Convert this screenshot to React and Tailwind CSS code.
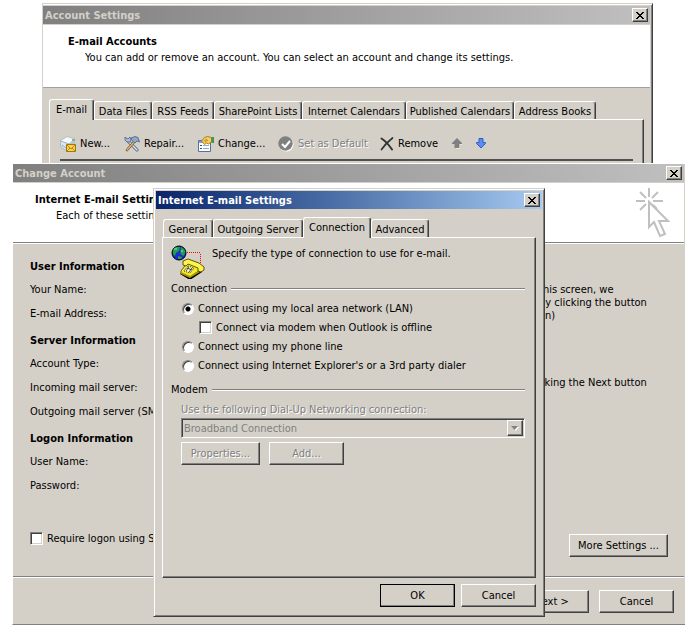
import React, { useState } from "react";

const raised =
    "bg-[#d4d0c8] border border-t-white border-l-white border-r-[#404040] border-b-[#404040] shadow-[inset_-1px_-1px_0_#808080]";

const disabledText = "text-[#808080] [text-shadow:1px_1px_0_#ffffff]";

const accountTabs = [
    { label: "Data Files", width: "w-[58px]" },
    { label: "RSS Feeds", width: "w-[62px]" },
    { label: "SharePoint Lists", width: "w-[88px]" },
    { label: "Internet Calendars", width: "w-[104px]" },
    { label: "Published Calendars", width: "w-[108px]" },
    { label: "Address Books", width: "w-[82px]" },
];

function TitleBar({ title, active }) {
    return (
        <div
            className={
                "flex h-[18px] items-center justify-between bg-linear-to-r pl-0.5 pr-0.5 font-bold " +
                (active ? "from-[#0a246a] to-[#a6caf0] text-white" : "from-[#808080] to-[#c0c0c0] text-[#d4d0c8]")
            }
        >
            <h2>{title}</h2>
            <button aria-label="Close" className={"flex h-[14px] w-4 items-center justify-center " + raised}>
                <svg width="8" height="7" viewBox="0 0 8 7" shapeRendering="crispEdges">
                    <path
                        d="M0 0h2v1h1v1h2v-1h1v-1h2v1h-1v1h-1v1h-1v1h1v1h1v1h1v1h-2v-1h-1v-1h-2v1h-1v1h-2v-1h1v-1h1v-1h1v-1h-1v-1h-1v-1h-1z"
                        fill="#000"
                    />
                </svg>
            </button>
        </div>
    );
}

function Tab({ label, width, selected }) {
    return (
        <button
            role="tab"
            aria-selected={!!selected}
            className={
                "flex shrink-0 justify-center whitespace-nowrap rounded-t-[3px] border border-b-0 border-t-white border-l-white border-r-[#404040] bg-[#d4d0c8] shadow-[inset_-1px_0_0_#808080] " +
                width +
                (selected ? " relative z-10 -mb-px h-[21px] pt-[3px]" : " h-[18px] pt-[3px]")
            }
        >
            {label}
        </button>
    );
}

function PushButton({ children, className, disabled }) {
    return (
        <button
            disabled={disabled}
            className={"flex h-[23px] items-center justify-center whitespace-nowrap " + raised + " " + className + (disabled ? " " + disabledText : "")}
        >
            {children}
        </button>
    );
}

function CheckBox(props) {
    return (
        <input
            type="checkbox"
            className="size-[13px] shrink-0 appearance-none border border-t-[#808080] border-l-[#808080] border-r-white border-b-white bg-white shadow-[inset_1px_1px_0_#404040,inset_-1px_-1px_0_#d4d0c8] checked:bg-[#404040]"
            {...props}
        />
    );
}

function Radio({ label, value, selected, onSelect }) {
    return (
        <label className="flex h-[19px] items-center gap-1 pl-[19px]">
            <input
                type="radio"
                name="connection"
                checked={selected === value}
                onChange={() => onSelect(value)}
                className="size-3 shrink-0 appearance-none rounded-full border border-t-[#808080] border-l-[#808080] border-r-white border-b-white bg-white shadow-[inset_1px_1px_0_#404040] checked:bg-[radial-gradient(circle_at_center,#000_2px,#fff_3px)]"
            />
            {label}
        </label>
    );
}

function GroupHeading({ children }) {
    return (
        <legend className="flex w-full items-center gap-1 pl-2 pr-2.5 leading-[13px]">
            {children}
            <span className="h-0.5 flex-1 border-t border-t-[#808080] bg-white" />
        </legend>
    );
}

function NewIcon() {
    return (
        <svg width="16" height="16" viewBox="0 0 16 16">
            <path d="M0 5l7-4.500 8 2.500-6 5z" fill="#f6f9fc" stroke="#a9b4c4" strokeWidth=".8" />
            <path d="M0 5l9 3v6l-2 1-6-4z" fill="#dfe7f0" stroke="#9aa8bc" strokeWidth=".7" />
            <path d="M9 8l6-5v5l-6 5z" fill="#b7c5d8" />
            <path d="M2 9l4 3" stroke="#7fa9d8" />
            <path d="M6.500 8.500h9v7h-9z" fill="#fbd34c" stroke="#a37412" />
            <path d="M7 9l4 4 4-4M7 15l3-3M15 15l-3-3" fill="none" stroke="#b98617" />
            <path d="M12 4h3" stroke="#58b947" strokeWidth="1.500" />
        </svg>
    );
}

function RepairIcon() {
    return (
        <svg width="16" height="16" viewBox="0 0 16 16" fill="none">
            <path d="M4 5l9 9" stroke="#3f5674" strokeWidth="3" strokeLinecap="round" />
            <path d="M4 5l9 9" stroke="#d8e4f2" strokeWidth="1.600" strokeLinecap="round" />
            <path d="M1 1v3l2 2h3l1-2-1-3-2 2-2-1z" fill="#a9c0dc" stroke="#48617f" strokeWidth=".8" />
            <path d="M10 6l-7 8" stroke="#6d4a24" strokeWidth="2.600" strokeLinecap="round" />
            <path d="M10 6l-7 8" stroke="#e4b46d" strokeWidth="1.300" strokeLinecap="round" />
            <path d="M7 2l4-1.500 3 1 1.500 4.500-2.500-1-2 2-3-2.500z" fill="#8fa8c8" stroke="#48617f" strokeWidth=".8" />
        </svg>
    );
}

function ChangeIcon() {
    return (
        <svg width="16" height="16" viewBox="0 0 16 16">
            <path d="M.5 4.500h12v11h-12z" fill="#fff" stroke="#5272a4" />
            <path d="M1 5h11v2h-11z" fill="#7da2d8" />
            <path d="M2 9h2v1h-2zM2 12h2v1h-2z" fill="#2b4f8e" />
            <path d="M5 9h6v1h-6zM5 12h6v1h-6z" fill="#8fa9cf" />
            <path d="M3.500 5l3-3.500 3-1 4 1v4.500l-3 2-2-1-2 1.500z" fill="#f7cf57" stroke="#96691a" strokeWidth=".8" />
            <path d="M6 5l3-2M7 6l3-2" stroke="#a97720" strokeWidth=".8" />
            <path d="M13.500 1h2.500v6h-2.500z" fill="#3f9455" />
        </svg>
    );
}

function DefaultIcon() {
    return (
        <svg width="16" height="16" viewBox="0 0 16 16" fill="none">
            <circle cx="8.500" cy="8.500" r="7" fill="#fff" />
            <circle cx="7.500" cy="7.500" r="7.200" fill="#808080" />
            <path d="M4 8l3 3 5-6" stroke="#fff" strokeWidth="2" />
        </svg>
    );
}

function RemoveIcon() {
    return (
        <svg width="14" height="14" viewBox="0 0 14 14" fill="none" stroke="#333" strokeLinecap="round">
            <path d="M1.500 1.500Q7 5 12 12.500" strokeWidth="2" />
            <path d="M12.500 1Q6 6 1.500 12.500" strokeWidth="1.700" />
        </svg>
    );
}

function ArrowIcon({ up }) {
    return (
        <svg width="10" height="11" viewBox="0 0 10 11">
            {up ? (
                <>
                    <path d="M6 1.500l4 4v1h-2v4h-4v-4z" fill="#fff" />
                    <path d="M5 0l5 5v1h-2.500v4h-5v-4h-2.500v-1z" fill="#808080" />
                </>
            ) : (
                <path d="M3 .5h4v4h2.500v1l-4.500 4.500-4.500-4.500v-1h2.500z" fill="#5b8cf0" stroke="#2a55c0" strokeWidth=".9" />
            )}
        </svg>
    );
}

function ClickIcon() {
    return (
        <svg width="34" height="50" viewBox="0 0 34 50" fill="none" stroke="#c0c0c0" strokeWidth="2">
            <path d="M13 0v9M0 13h9M17 13h10M4 4l6 6M22 4l-6 6M4 22l6-6M17 17l4 4" />
            <path d="M13 14v25l5-5 6 14 5-2-6-13h9z" />
        </svg>
    );
}

function DialUpIcon() {
    return (
        <svg className="shrink-0" width="34" height="34" viewBox="0 0 34 34">
            <path d="M16 7h1v1h-1zM18 7h1v1h-1zM20 7h1v1h-1zM22 7h1v1h-1zM24 7h1v1h-1zM26 7h1v1h-1zM28 7h1v1h-1z" fill="#f00" />
            <path d="M29 9h1v1h-1zM29 11h1v1h-1zM29 13h1v1h-1zM29 15h1v1h-1zM29 17h1v1h-1z" fill="#f00" />
            <circle cx="8" cy="8" r="7" fill="#1a2bd8" stroke="#000" />
            <path d="M2 5l3-3h4l-1 4-3 2-1 3-2-2zM10 2l3 2 1.500 3-2 4-3-2v-3zM7 11l4 1-1 2h-3z" fill="#1fa33a" />
            <path d="M3 4h3M10 6h2" stroke="#8ee" />
            <path d="M10 28l7-10 14 4v5l-12 8-10-6z" fill="#000" />
            <path d="M10 26l6-8 13 3v4l-10 7-9-4z" fill="#f5ea2a" stroke="#4a4500" strokeWidth=".8" />
            <path d="M10 27l9 4 10-6v2l-10 6-9-4z" fill="#a89c00" />
            <path d="M12 20v-4l5-2 11 4 5 4v3l-3 2-3-1v-3l-10-4-2 2z" fill="#fff44a" stroke="#4a4500" strokeWidth=".9" />
            <path d="M17 21l6 2-4 5-6-2z" fill="#fffbc0" stroke="#000" strokeWidth=".8" strokeDasharray="1 1" />
            <path d="M16 23l5 2M18 22l-3 4M21 23l-3 4" stroke="#222" strokeWidth=".8" />
        </svg>
    );
}

function AccountSettings() {
    return (
        <section className="ml-[42px] mr-[47px] mt-[3px] self-start border border-[#d4d0c8] border-r-[#404040] bg-[#d4d0c8] pr-0.5 pt-0.5 shadow-[inset_0_1px_0_#fff,inset_-1px_0_0_#808080] [grid-area:1/1]">
            <TitleBar title="Account Settings" />
            <div className="mt-px h-[63px] border-b border-b-[#a0a0a0] bg-white pl-[25px] pt-[9px]">
                <h3 className="font-bold leading-4">E-mail Accounts</h3>
                <p className="whitespace-nowrap pl-[17px] leading-4">
                    You can add or remove an account. You can select an account and change its settings.
                </p>
            </div>
            <div className="pl-1.5 pr-1.5 pt-[11px]">
                <div role="tablist" className="flex items-end">
                    <Tab label="E-mail" width="w-[45px]" selected />
                    {accountTabs.map((t) => (
                        <Tab key={t.label} label={t.label} width={t.width} />
                    ))}
                </div>
                <div className="border border-t-white border-l-white border-r-[#404040] border-b-[#404040] px-2.5 pt-3 shadow-[inset_-1px_0_0_#808080]">
                    <div className="flex h-6 items-center whitespace-nowrap pb-px">
                        <button className="flex w-16 items-center gap-1">
                            <NewIcon />
                            New...
                        </button>
                        <button className="flex w-[74px] items-center gap-1">
                            <RepairIcon />
                            Repair...
                        </button>
                        <button className="flex w-20 items-center gap-1">
                            <ChangeIcon />
                            Change...
                        </button>
                        <button disabled className={"flex w-[102px] items-center gap-1 " + disabledText}>
                            <DefaultIcon />
                            Set as Default
                        </button>
                        <button className="flex w-[72px] items-center gap-1">
                            <RemoveIcon />
                            Remove
                        </button>
                        <button disabled aria-label="Move up" className="w-6">
                            <ArrowIcon up />
                        </button>
                        <button aria-label="Move down">
                            <ArrowIcon />
                        </button>
                    </div>
                    <div className="mt-[3px] h-24 border-t-2 border-t-[#505050]" />
                </div>
            </div>
        </section>
    );
}

function ChangeAccount() {
    return (
        <section className="ml-3 mr-[15px] mt-[163px] self-start border-b border-l border-t border-b-[#808080] border-l-white border-t-white bg-[#d4d0c8] pr-px [grid-area:1/1]">
            <TitleBar title="Change Account" />
            <div className="mt-px flex h-[60px] justify-between border-b border-b-[#808080] bg-white pl-[22px] pr-3.5 pt-[5px]">
                <div className="whitespace-nowrap pt-1">
                    <h3 className="font-bold leading-4">Internet E-mail Settings</h3>
                    <p className="pl-[21px] leading-4">Each of these settings are required to get your e-mail account working.</p>
                </div>
                <ClickIcon />
            </div>
            <div className="flex whitespace-nowrap border-t border-t-white pl-[17px] pt-[11px]">
                <div className="flex-1">
                    <h4 className="flex h-[22px] items-center font-bold">User Information</h4>
                    <p className="flex h-6 items-center">Your Name:</p>
                    <p className="flex h-6 items-center">E-mail Address:</p>
                    <h4 className="mt-1 flex h-[22px] items-center font-bold">Server Information</h4>
                    <p className="flex h-6 items-center">Account Type:</p>
                    <p className="flex h-6 items-center">Incoming mail server:</p>
                    <p className="flex h-6 items-center">Outgoing mail server (SMTP):</p>
                    <h4 className="mt-1 flex h-[22px] items-center font-bold">Logon Information</h4>
                    <p className="flex h-6 items-center">User Name:</p>
                    <p className="flex h-6 items-center">Password:</p>
                </div>
                <div className="w-[145px] pt-7 leading-[13px]">
                    <p>
                        this screen, we
                        <br />
                        by clicking the button
                        <br />
                        on)
                    </p>
                    <p className="pt-[54px]">cking the Next button</p>
                </div>
            </div>
            <div className="mt-[35px] flex items-start justify-between pb-[19px] pl-[17px] pr-4">
                <label className="flex items-center gap-1 whitespace-nowrap">
                    <CheckBox />
                    Require logon using Secure Password Authentication
                </label>
                <PushButton className="mt-0.5 w-[99px]">More Settings ...</PushButton>
            </div>
            <div className="h-0.5 border-t border-t-[#808080] bg-white" />
            <div className="flex justify-end gap-2.5 pb-[11px] pr-2.5 pt-3">
                <PushButton className="w-[75px]">Next &gt;</PushButton>
                <PushButton className="w-[75px]">Cancel</PushButton>
            </div>
        </section>
    );
}

function InternetSettings() {
    const [connection, setConnection] = useState("lan");

    return (
        <section className="ml-[153px] mr-[155px] mt-[188px] self-start border border-[#d4d0c8] border-r-[#404040] border-b-[#404040] bg-[#d4d0c8] p-0.5 shadow-[inset_1px_1px_0_#fff,inset_-1px_-1px_0_#808080] [grid-area:1/1]">
            <TitleBar title="Internet E-mail Settings" active />
            <div className="pl-1.5 pr-1.5 pt-2">
                <div role="tablist" className="flex items-end pl-px">
                    <Tab label="General" width="w-[50px]" />
                    <Tab label="Outgoing Server" width="w-[90px]" />
                    <Tab label="Connection" width="w-[68px]" selected />
                    <Tab label="Advanced" width="w-[58px]" />
                </div>
                <div className="min-h-[341px] border border-t-white border-l-white border-r-[#404040] border-b-[#404040] pt-[7px] shadow-[inset_-1px_-1px_0_#808080]">
                    <div className="flex gap-[7px] pl-2">
                        <DialUpIcon />
                        <p className="whitespace-nowrap pt-0.5">Specify the type of connection to use for e-mail.</p>
                    </div>
                    <fieldset className="mt-[3px] pt-1">
                        <GroupHeading>Connection</GroupHeading>
                        <div className="whitespace-nowrap">
                            <Radio label="Connect using my local area network (LAN)" value="lan" selected={connection} onSelect={setConnection} />
                            <label className="flex h-[19px] items-center gap-1 pl-9">
                                <CheckBox />
                                Connect via modem when Outlook is offline
                            </label>
                            <Radio label="Connect using my phone line" value="phone" selected={connection} onSelect={setConnection} />
                            <Radio
                                label="Connect using Internet Explorer's or a 3rd party dialer"
                                value="dialer"
                                selected={connection}
                                onSelect={setConnection}
                            />
                        </div>
                    </fieldset>
                    <fieldset disabled className="mt-2">
                        <GroupHeading>Modem</GroupHeading>
                        <div className="pl-[18px] pr-2.5 pt-[7px]">
                            <label htmlFor="dialup" className={"block whitespace-nowrap leading-[13px] " + disabledText}>
                                Use the following Dial-Up Networking connection:
                            </label>
                            <div className="relative mt-0.5">
                                <select
                                    id="dialup"
                                    disabled
                                    className="block h-5 w-full appearance-none border border-t-[#808080] border-l-[#808080] border-r-white border-b-white bg-[#d4d0c8] pl-0.5 text-[#808080] opacity-100 shadow-[inset_1px_1px_0_#404040]"
                                >
                                    <option>Broadband Connection</option>
                                </select>
                                <span className={"pointer-events-none absolute bottom-0.5 right-0.5 top-0.5 flex w-4 items-center justify-center " + raised}>
                                    <svg width="8" height="5" viewBox="0 0 8 5">
                                        <path d="M1 1h7l-3.500 4z" fill="#fff" />
                                        <path d="M0 0h7l-3.500 4z" fill="#808080" />
                                    </svg>
                                </span>
                            </div>
                            <div className="mt-1 flex gap-[9px]">
                                <PushButton disabled className="w-[79px]">Properties...</PushButton>
                                <PushButton disabled className="w-[75px]">Add...</PushButton>
                            </div>
                        </div>
                    </fieldset>
                </div>
                <div className="flex justify-end gap-1.5 pb-[7px] pt-1.5">
                    <PushButton className="w-[75px] outline outline-black -outline-offset-1">OK</PushButton>
                    <PushButton className="w-[75px]">Cancel</PushButton>
                </div>
            </div>
        </section>
    );
}

export default function App() {
    return (
        <main className="grid min-h-screen overflow-hidden bg-white font-['DejaVu_Sans_Condensed','DejaVu_Sans',sans-serif] text-[11px] leading-[13px] text-black">
            <AccountSettings />
            <ChangeAccount />
            <InternetSettings />
        </main>
    );
}
